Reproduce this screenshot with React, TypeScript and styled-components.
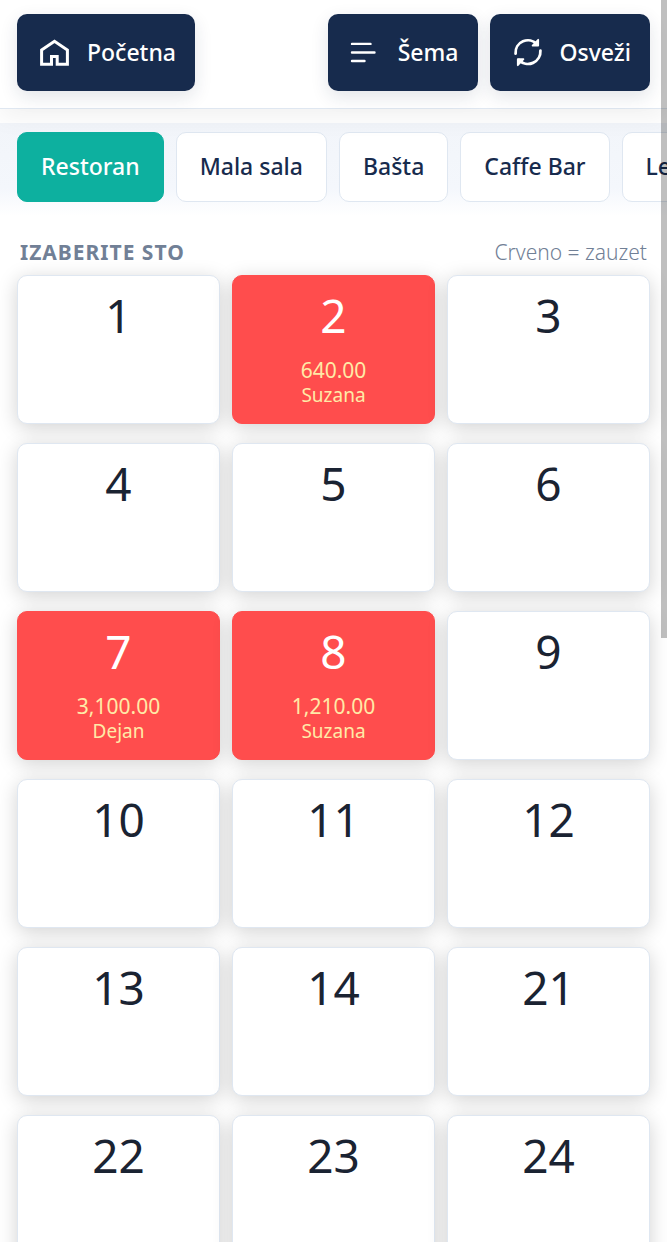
import React, { useState } from 'react';
import styled, { createGlobalStyle } from 'styled-components';

const GlobalStyle = createGlobalStyle`
  *, *::before, *::after { box-sizing: border-box; }
  body {
    margin: 0;
    background: #ffffff;
    font-family: 'Noto Sans', 'Open Sans', sans-serif;
    color: #172b4d;
  }
  button { font-family: inherit; cursor: pointer; }
`;

const Page = styled.div`
  position: relative;
  height: 100vh;
  padding-bottom: 18px;
  overflow: hidden;
`;

const Screen = styled.div`
  display: flex;
  flex-direction: column;
  height: 100%;
  overflow: hidden;
`;

const Header = styled.header`
  position: relative;
  z-index: 1;
  display: flex;
  flex: none;
  justify-content: space-between;
  padding: 14px 17px 17px;
  border-bottom: 1px solid #dfe7f1;
  box-shadow: 0 8px 24px rgba(0, 0, 0, 0.06);
`;

const Actions = styled.div`
  display: flex;
  gap: 12px;
`;

const ActionButton = styled.button`
  display: flex;
  align-items: center;
  gap: 16px;
  height: 77px;
  padding: 0 19px 2px 22px;
  border: 0;
  border-radius: 10px;
  background: #172b4d;
  color: #ffffff;
  font-size: 23px;
  font-weight: 500;
  line-height: 32px;
  box-shadow: 0 6px 18px rgba(23, 43, 77, 0.12);

  svg { flex: none; }
`;

const Tabs = styled.nav`
  display: flex;
  flex: none;
  gap: 12px;
  margin-top: 14px;
  padding: 9px 17px 14px;
  overflow: hidden;
  background: linear-gradient(#f2f5fa 0%, #f4f7fc 70%, #ffffff 100%);
`;

const Tab = styled.button<{ $active: boolean }>`
  flex: none;
  height: 70px;
  padding: 0 23px 2px;
  border: 1px solid ${(p) => (p.$active ? '#0db09f' : '#dfe7f1')};
  border-radius: 10px;
  background: ${(p) => (p.$active ? '#0db09f' : '#ffffff')};
  color: ${(p) => (p.$active ? '#ffffff' : '#172b4d')};
  font-size: 23px;
  font-weight: 500;
  line-height: 32px;
`;

const Main = styled.main`
  flex: 1;
  min-height: 0;
  padding: 21px 17px 0;
  overflow: hidden;
`;

const Caption = styled.div`
  display: flex;
  align-items: center;
  justify-content: space-between;
  padding: 0 3px;
  line-height: 30px;
  margin-bottom: 8px;
`;

const Title = styled.h1`
  margin: 0;
  color: #718096;
  font-size: 21px;
  font-weight: 700;
  letter-spacing: 1px;
  text-transform: uppercase;
`;

const Legend = styled.span`
  color: #718096;
  font-size: 21px;
  font-weight: 300;
`;

const Grid = styled.div`
  display: grid;
  grid-template-columns: repeat(3, 1fr);
  gap: 19px 12px;
`;

const TableCard = styled.button<{ $busy: boolean }>`
  display: flex;
  flex-direction: column;
  align-items: center;
  height: 149px;
  padding: 8px 0 0;
  border: 1px solid ${(p) => (p.$busy ? '#ff4d4d' : '#dfe7f1')};
  border-radius: 10px;
  background: ${(p) => (p.$busy ? '#ff4d4d' : '#ffffff')};
  color: ${(p) => (p.$busy ? '#ffffff' : '#1a2332')};
  box-shadow: 0 4px 20px rgba(0, 0, 0, 0.18);
`;

const TableNumber = styled.span`
  font-size: 46px;
  font-weight: 400;
  line-height: 62px;
`;

const Amount = styled.span`
  margin-top: 12px;
  color: #ffeaa7;
  font-size: 21px;
  line-height: 25px;
`;

const Waiter = styled.span`
  color: #ffeaa7;
  font-size: 19px;
  line-height: 25px;
`;

const ScrollThumb = styled.div`
  position: absolute;
  z-index: 2;
  top: 0;
  right: 0;
  width: 6px;
  height: 638px;
  background: rgba(0, 0, 0, 0.25);
`;

const HomeIcon = () => (
  <svg width="32" height="30" viewBox="0 0 32 30" fill="none" stroke="currentColor" strokeWidth="3" aria-hidden="true">
    <path d="M2.6 13.1 15.5 4.3 28.4 13.1V27.3H18.2V19.5H12.5V27.3H2.6Z" />
  </svg>
);

const MenuIcon = () => (
  <svg width="32" height="30" viewBox="0 0 32 30" fill="none" stroke="currentColor" strokeWidth="2.4" strokeLinecap="round" aria-hidden="true">
    <path d="M2 6.9H20.5M2 15.5H24.5M2 24H14.5" />
  </svg>
);

const RefreshIcon = () => (
  <svg width="32" height="30" viewBox="0 0 32 30" fill="none" stroke="currentColor" strokeWidth="2.8" strokeLinecap="round" strokeLinejoin="round" aria-hidden="true">
    <path d="M3.6 16.6A12.4 12.4 0 0 1 25 7.2M28.4 13.6A12.4 12.4 0 0 1 7 23" />
    <path d="M26.2 2.8V8.6H20.6ZM5.8 28.2V22.2H11.4Z" strokeWidth="1.8" fill="currentColor" />
  </svg>
);

const rooms = ['Restoran', 'Mala sala', 'Bašta', 'Caffe Bar', 'Letnja bašta'];

type Table = { id: number; amount?: string; waiter?: string };

const tables: Table[] = [
  { id: 1 },
  { id: 2, amount: '640.00', waiter: 'Suzana' },
  { id: 3 },
  { id: 4 },
  { id: 5 },
  { id: 6 },
  { id: 7, amount: '3,100.00', waiter: 'Dejan' },
  { id: 8, amount: '1,210.00', waiter: 'Suzana' },
  { id: 9 },
  { id: 10 },
  { id: 11 },
  { id: 12 },
  { id: 13 },
  { id: 14 },
  { id: 21 },
  { id: 22 },
  { id: 23 },
  { id: 24 },
];

export default function App() {
  const [room, setRoom] = useState(rooms[0]);

  return (
    <>
      <GlobalStyle />
      <Page>
        <Screen>
          <Header>
            <ActionButton type="button"><HomeIcon />Početna</ActionButton>
            <Actions>
              <ActionButton type="button"><MenuIcon />Šema</ActionButton>
              <ActionButton type="button"><RefreshIcon />Osveži</ActionButton>
            </Actions>
          </Header>
          <Tabs>
            {rooms.map((name) => (
              <Tab key={name} type="button" $active={name === room} onClick={() => setRoom(name)}>
                {name}
              </Tab>
            ))}
          </Tabs>
          <Main>
            <Caption>
              <Title>Izaberite sto</Title>
              <Legend>Crveno = zauzet</Legend>
            </Caption>
            <Grid>
              {tables.map((t) => (
                <TableCard key={t.id} type="button" $busy={Boolean(t.waiter)}>
                  <TableNumber>{t.id}</TableNumber>
                  {t.amount && <Amount>{t.amount}</Amount>}
                  {t.waiter && <Waiter>{t.waiter}</Waiter>}
                </TableCard>
              ))}
            </Grid>
          </Main>
        </Screen>
        <ScrollThumb />
      </Page>
    </>
  );
}
